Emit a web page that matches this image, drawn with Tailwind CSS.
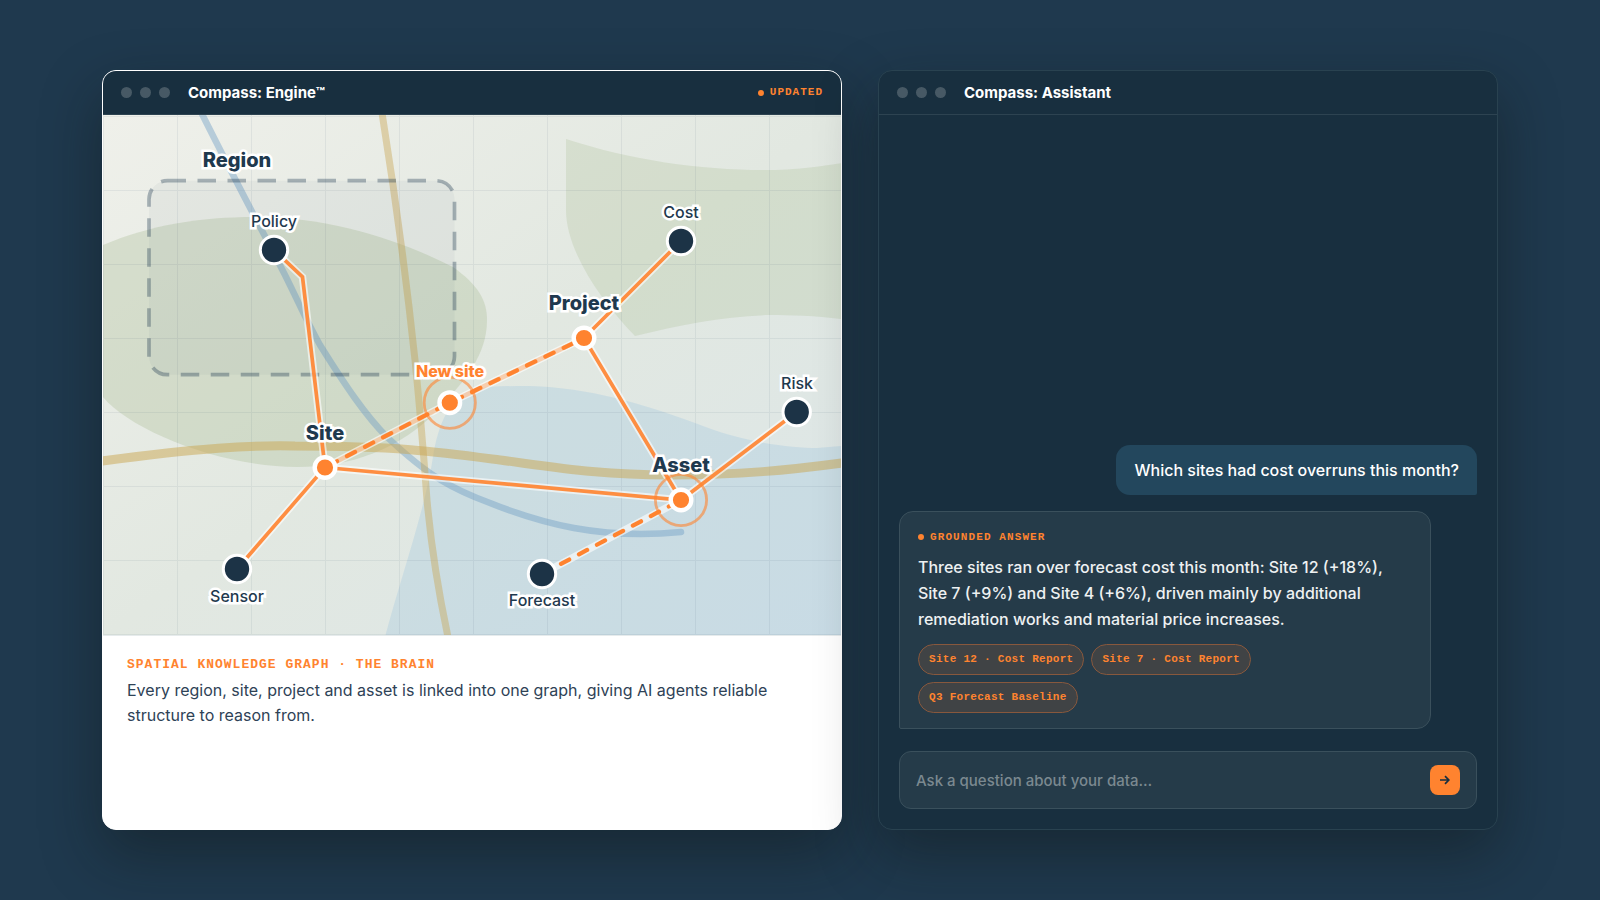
<!DOCTYPE html>
<html lang="en">
  <head>
    <meta charset="UTF-8" />
    <meta name="viewport" content="width=device-width, initial-scale=1.0" />
    <title>Compass</title>
    <script src="https://cdn.jsdelivr.net/npm/@tailwindcss/browser@4"></script>
  </head>
  <body class="bg-[#1f394e] font-['Inter',sans-serif] text-base font-medium text-white">
    <main class="grid min-h-screen grid-cols-[37fr_31fr] gap-9 px-[102px] py-[70px]">
      <!-- Engine window -->
      <section class="flex flex-col overflow-hidden rounded-[14px] border border-white bg-white shadow-[0_24px_60px_rgba(14,18,16,0.42)]">
        <header class="flex h-11 items-center gap-[18px] border-b border-[#2d4351] bg-[#182f3f] px-[18px]">
          <div class="flex gap-2">
            <span class="size-[11px] rounded-full bg-[#475965]"></span>
            <span class="size-[11px] rounded-full bg-[#475965]"></span>
            <span class="size-[11px] rounded-full bg-[#475965]"></span>
          </div>
          <h2 class="pt-0.5 text-[15px] font-bold">Compass: Engine™</h2>
          <p class="ml-auto flex items-center gap-1.5 font-['Liberation_Mono',monospace] text-[11px] font-bold tracking-[1px] text-[#ff832f]">
            <span class="size-1.5 rounded-full bg-[#ff832f]"></span>UPDATED
          </p>
        </header>

        <svg class="block w-full border-b border-[#e6ebec]" viewBox="103 115 738 520" role="img" aria-label="Knowledge graph map">
          <defs>
            <linearGradient id="land" x1="0" y1="0" x2="1" y2="1">
              <stop offset="0" stop-color="#eff0ea" />
              <stop offset="0.5" stop-color="#e2e8e1" />
              <stop offset="1" stop-color="#dce6e8" />
            </linearGradient>
            <pattern id="grid" x="103" y="116" width="74" height="74" patternUnits="userSpaceOnUse">
              <path d="M74 0.5H0.5V74" fill="none" stroke="#1f3a50" stroke-opacity="0.07" />
            </pattern>
          </defs>
          <rect x="103" y="115" width="738" height="520" fill="url(#land)" />

          <!-- terrain -->
          <path d="M103 245C150 225 200 217 255 217C330 217 400 240 453 267C478 285 487 300 487 320C487 355 465 380 440 408C400 450 350 467 297 467C220 467 130 430 103 397Z" fill="#a8bb91" fill-opacity="0.32" />
          <path d="M566 139C630 160 700 170 763 170C800 170 820 166 842 163V319C817 316 790 315 770 315C725 316 680 325 635 336C600 300 566 250 566 210Z" fill="#a8bb91" fill-opacity="0.25" />
          <path d="M385 637C400 580 425 510 433 457C438 425 450 395 475 389C490 386 510 386 530 386C590 388 640 403 695 423C745 443 790 448 817 448L842 446V637Z" fill="#a8cbdf" fill-opacity="0.38" />
          <rect x="103" y="115" width="738" height="520" fill="url(#grid)" />

          <!-- river and roads -->
          <path d="M200 110C240 190 262 230 285 275C300 305 305 318 320 345C345 385 365 415 387 437C430 478 455 490 490 503C540 523 600 540 681 532" fill="none" stroke="#6b9ac4" stroke-opacity="0.42" stroke-width="6.5" stroke-linecap="round" />
          <path d="M102 461C200 448 250 445 295 446C400 446 440 452 500 460C560 468 600 475 670 475C740 475 790 470 842 463" fill="none" stroke="#c9a550" stroke-opacity="0.5" stroke-width="9" />
          <path d="M382 113C396 200 407 285 415 360C419 400 423 445 427 500C431 545 438 590 448 637" fill="none" stroke="#c9a550" stroke-opacity="0.42" stroke-width="7" />

          <rect x="149" y="180.7" width="305.5" height="194" rx="18.5" fill="#1f3a50" fill-opacity="0.04" stroke="#1f3a50" stroke-opacity="0.35" stroke-width="3.7" stroke-dasharray="18.5 11.5" />

          <!-- edges -->
          <g fill="none" stroke="#fff" stroke-opacity="0.6" stroke-width="7.4">
            <path d="M274 250L302.5 277L325 467.5L237 569" />
            <path d="M325 467.5L681 500L796.7 412" />
            <path d="M681 241L584 338L681 500L542 574" />
            <path d="M325 467.5L449.8 402.7L584 338" />
          </g>
          <g fill="none" stroke="#ff832f" stroke-opacity="0.9" stroke-width="3.7">
            <path d="M274 250L302.5 277L325 467.5L237 569" />
            <path d="M325 467.5L681 500L796.7 412" />
            <path d="M681 241L584 338L681 500" />
          </g>
          <path d="M325 467.5L449.8 402.7L584 338" fill="none" stroke="#ff832f" stroke-opacity="0.35" stroke-width="4.6" />
          <g fill="none" stroke="#ff832f" stroke-width="4.2" stroke-linecap="round" stroke-dasharray="9.25 11.1">
            <path d="M325 467.5L449.8 402.7M449.8 402.7L584 338" stroke-dashoffset="-4.3" />
            <path d="M681 500L542 574" stroke-dashoffset="-4.6" />
          </g>

          <!-- nodes -->
          <g fill="none" stroke="#ff832f" stroke-opacity="0.6" stroke-width="2.8">
            <circle cx="449.8" cy="402.7" r="25.6" />
            <circle cx="681" cy="500" r="25.6" />
          </g>
          <g fill="#ff832f" stroke="#fff" stroke-width="4.4">
            <circle cx="325" cy="467.5" r="10.3" />
            <circle cx="449.8" cy="402.7" r="10.3" />
            <circle cx="584" cy="338" r="10.3" />
            <circle cx="681" cy="500" r="10.3" />
          </g>
          <g fill="#1c3346" stroke="#fff" stroke-width="3">
            <circle cx="274" cy="250" r="13.7" />
            <circle cx="681" cy="241" r="13.7" />
            <circle cx="796.7" cy="412" r="13.7" />
            <circle cx="237" cy="569" r="13.7" />
            <circle cx="542" cy="574" r="13.7" />
          </g>

          <!-- labels -->
          <g class="text-xl font-extrabold" text-anchor="middle" fill="#1f394e" stroke="#fff" stroke-width="5" paint-order="stroke">
            <text x="237" y="167">Region</text>
            <text x="584" y="310">Project</text>
            <text x="325" y="440">Site</text>
            <text x="681" y="472">Asset</text>
          </g>
          <g class="text-base font-medium" text-anchor="middle" fill="#1f394e" stroke="#fff" stroke-width="5" paint-order="stroke">
            <text x="274" y="227">Policy</text>
            <text x="681" y="218">Cost</text>
            <text x="797" y="389">Risk</text>
            <text x="237" y="602">Sensor</text>
            <text x="542" y="606">Forecast</text>
          </g>
          <text x="450" y="377" class="text-base font-extrabold" text-anchor="middle" fill="#ff832f" stroke="#fff" stroke-width="5" paint-order="stroke">New site</text>
        </svg>

        <div class="px-6 py-[18px]">
          <h3 class="font-['Liberation_Mono',monospace] text-[13px] leading-[22px] font-bold tracking-[1px] text-[#ff832f]">SPATIAL KNOWLEDGE GRAPH · THE BRAIN</h3>
          <p class="mt-0.5 leading-[25px] font-normal text-[#2e4256]">
            Every region, site, project and asset is linked into one graph, giving AI agents reliable structure to reason from.
          </p>
        </div>
      </section>

      <!-- Assistant window -->
      <section class="flex flex-col overflow-hidden rounded-[14px] border border-[#294250] bg-[#182f3f] shadow-[0_24px_60px_rgba(14,18,16,0.42)]">
        <header class="flex h-11 items-center gap-[18px] border-b border-[#2d4351] px-[18px]">
          <div class="flex gap-2">
            <span class="size-[11px] rounded-full bg-[#475965]"></span>
            <span class="size-[11px] rounded-full bg-[#475965]"></span>
            <span class="size-[11px] rounded-full bg-[#475965]"></span>
          </div>
          <h2 class="pt-0.5 text-[15px] font-bold">Compass: Assistant</h2>
        </header>

        <div class="flex flex-1 flex-col justify-end p-5">
          <p class="self-end rounded-[14px] rounded-br-xs bg-[#23475d] px-[18px] py-3 leading-[26px]">
            Which sites had cost overruns this month?
          </p>

          <article class="mt-4 w-[92%] rounded-[14px] rounded-bl-xs border border-[#3a505c] bg-[#253b49] px-[18px] py-[15px]">
            <h3 class="flex items-center gap-1.5 font-['Liberation_Mono',monospace] text-[11px] leading-5 font-bold tracking-widest text-[#ff832f]">
              <span class="size-1.5 rounded-full bg-[#ff832f]"></span>GROUNDED ANSWER
            </h3>
            <p class="mt-[7px] leading-[26px] text-[#eef1f2]">
              Three sites ran over forecast cost this month: Site 12 (+18%), Site 7 (+9%) and Site 4 (+6%), driven mainly by additional remediation works and material price increases.
            </p>
            <div class="mt-3 flex max-w-[400px] flex-wrap gap-[7px] font-['Liberation_Mono',monospace] text-[11px] leading-[21px] font-bold tracking-wide text-[#ff832f]">
              <button type="button" class="rounded-full border border-[#88583d] bg-[#404345] px-2.5 py-1">Site 12 · Cost Report</button>
              <button type="button" class="rounded-full border border-[#88583d] bg-[#404345] px-2.5 py-1">Site 7 · Cost Report</button>
              <button type="button" class="rounded-full border border-[#88583d] bg-[#404345] px-2.5 py-1">Q3 Forecast Baseline</button>
            </div>
          </article>

          <form class="mt-[22px] flex h-[58px] items-center rounded-xl border border-[#3a505c] bg-[#253b49] px-4">
            <input type="text" aria-label="Ask a question" placeholder="Ask a question about your data…" class="min-w-0 flex-1 bg-transparent pt-0.5 text-[15px] outline-none placeholder:text-[#7b8990]" />
            <button type="submit" aria-label="Send" class="grid size-[30px] place-items-center rounded-lg bg-[#ff832f]">
              <svg class="size-3" viewBox="0 0 12 12" fill="none" stroke="#192f3f" stroke-width="1.7">
                <path d="M1 6H10M6 2.2L9.8 6L6 9.8" />
              </svg>
            </button>
          </form>
        </div>
      </section>
    </main>
  </body>
</html>
